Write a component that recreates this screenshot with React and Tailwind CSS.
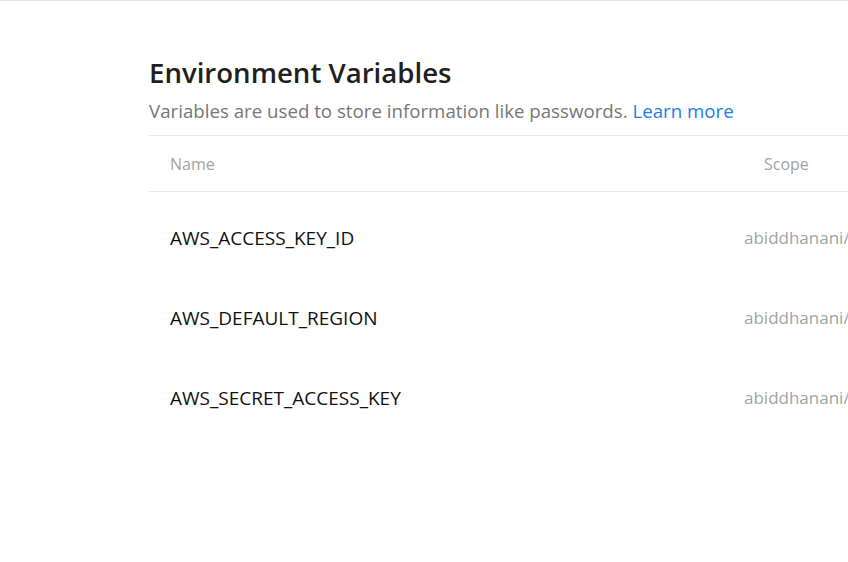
import React from 'react';

const rows = ['AWS_ACCESS_KEY_ID', 'AWS_DEFAULT_REGION', 'AWS_SECRET_ACCESS_KEY'];

export default function App() {
  return (
    <div
      className="w-[848px] h-[562px] overflow-hidden bg-white border-t border-[#e6e2e5]"
      style={{ fontFamily: '"Open Sans", "Noto Sans", sans-serif' }}
    >
      <div className="pl-[149px] pt-[49px] w-[1100px]">
        <h1 className="text-[27.6px] leading-[44px] font-semibold text-[#231f20]">Environment Variables</h1>
        <p className="text-[18.7px] leading-[28px] text-[#777] mt-[3px]">
          Variables are used to store information like passwords.{' '}
          <a className="text-[#1a7fe8]">Learn more</a>
        </p>
        <div className="mt-[10px] border-t border-[#e8e8e8]">
          <div className="flex h-[56px] items-center border-b border-[#e8e8e8] text-[16px] text-[#a3a3a3]">
            <div className="w-[595px] pl-[21px]">Name</div>
            <div className="pl-[20px]">Scope</div>
          </div>
          <div className="pt-[6px]">
            {rows.map((r) => (
              <div key={r} className="flex h-[80px] items-center">
                <div className="w-[595px] pl-[21px] text-[19px] text-[#111]">{r}</div>
                <div className="text-[17px] text-[#a3a3a3]">abiddhanani/aws-demo</div>
              </div>
            ))}
          </div>
        </div>
      </div>
    </div>
  );
}
